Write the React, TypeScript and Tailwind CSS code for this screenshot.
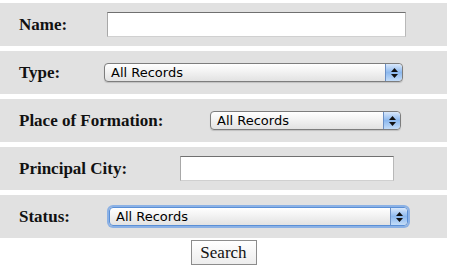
import React from "react"

const labelFont = { fontFamily: '"Liberation Serif", "Times New Roman", serif' }
const sansFont = { fontFamily: '"DejaVu Sans", "Lucida Grande", sans-serif' }

function Stepper() {
  return (
    <div className="flex h-full w-[17px] flex-col items-center justify-center gap-[2px] rounded-r-[4px] border-l border-[#6b8fc4] bg-gradient-to-b from-[#d9e8fb] via-[#8cb8ee] to-[#c3dcf8]">
      <svg width="7" height="4" viewBox="0 0 7 4">
        <path d="M3.5 0 L7 4 L0 4 Z" fill="#111" />
      </svg>
      <svg width="7" height="4" viewBox="0 0 7 4">
        <path d="M0 0 L7 0 L3.5 4 Z" fill="#111" />
      </svg>
    </div>
  )
}

function FakeSelect({ width, focused }: { width: string; focused?: boolean }) {
  return (
    <div
      className={`flex h-[19px] ${width} items-center overflow-hidden rounded-[4px] border bg-gradient-to-b from-white via-[#f1f1f1] to-[#e2e2e2] text-[13px] text-black ${
        focused
          ? "border-[#5a8fd6] shadow-[0_0_0_2px_rgba(110,160,230,0.75)]"
          : "border-[#7d7d7d] shadow-[0_1px_1px_rgba(0,0,0,0.15)]"
      }`}
      style={sansFont}
    >
      <span className="flex-1 pl-[6px] leading-none">All Records</span>
      <Stepper />
    </div>
  )
}

function TextBox({ width }: { width: string }) {
  return (
    <input
      type="text"
      className={`h-[25px] ${width} border border-t-[#707070] border-l-[#a8a8a8] border-r-[#b8b8b8] border-b-[#d0d0d0] bg-white outline-none`}
    />
  )
}

function Row({ label, labelWidth, children }: { label: string; labelWidth: string; children: React.ReactNode }) {
  return (
    <div className="flex h-[43px] items-center bg-[#e1e1e1] pl-[19px]">
      <span className={`${labelWidth} text-[17px] font-bold text-[#111]`} style={labelFont}>
        {label}
      </span>
      {children}
    </div>
  )
}

export default function App() {
  return (
    <div className="w-[447px] bg-white pt-[3px]">
      <div className="flex flex-col gap-[5px]">
        <Row label="Name:" labelWidth="w-[88px]">
          <TextBox width="w-[299px]" />
        </Row>
        <Row label="Type:" labelWidth="w-[85px]">
          <FakeSelect width="w-[299px]" />
        </Row>
        <Row label="Place of Formation:" labelWidth="w-[191px]">
          <FakeSelect width="w-[191px]" />
        </Row>
        <Row label="Principal City:" labelWidth="w-[161px]">
          <TextBox width="w-[214px]" />
        </Row>
        <Row label="Status:" labelWidth="w-[90px]">
          <FakeSelect width="w-[299px]" focused />
        </Row>
      </div>
      <div className="mt-[2px] flex justify-center">
        <button
          type="button"
          className="h-[25px] w-[66px] border border-[#8c8c8c] bg-gradient-to-b from-white to-[#ededed] text-[17px] leading-none text-[#111]"
          style={labelFont}
        >
          Search
        </button>
      </div>
    </div>
  )
}
